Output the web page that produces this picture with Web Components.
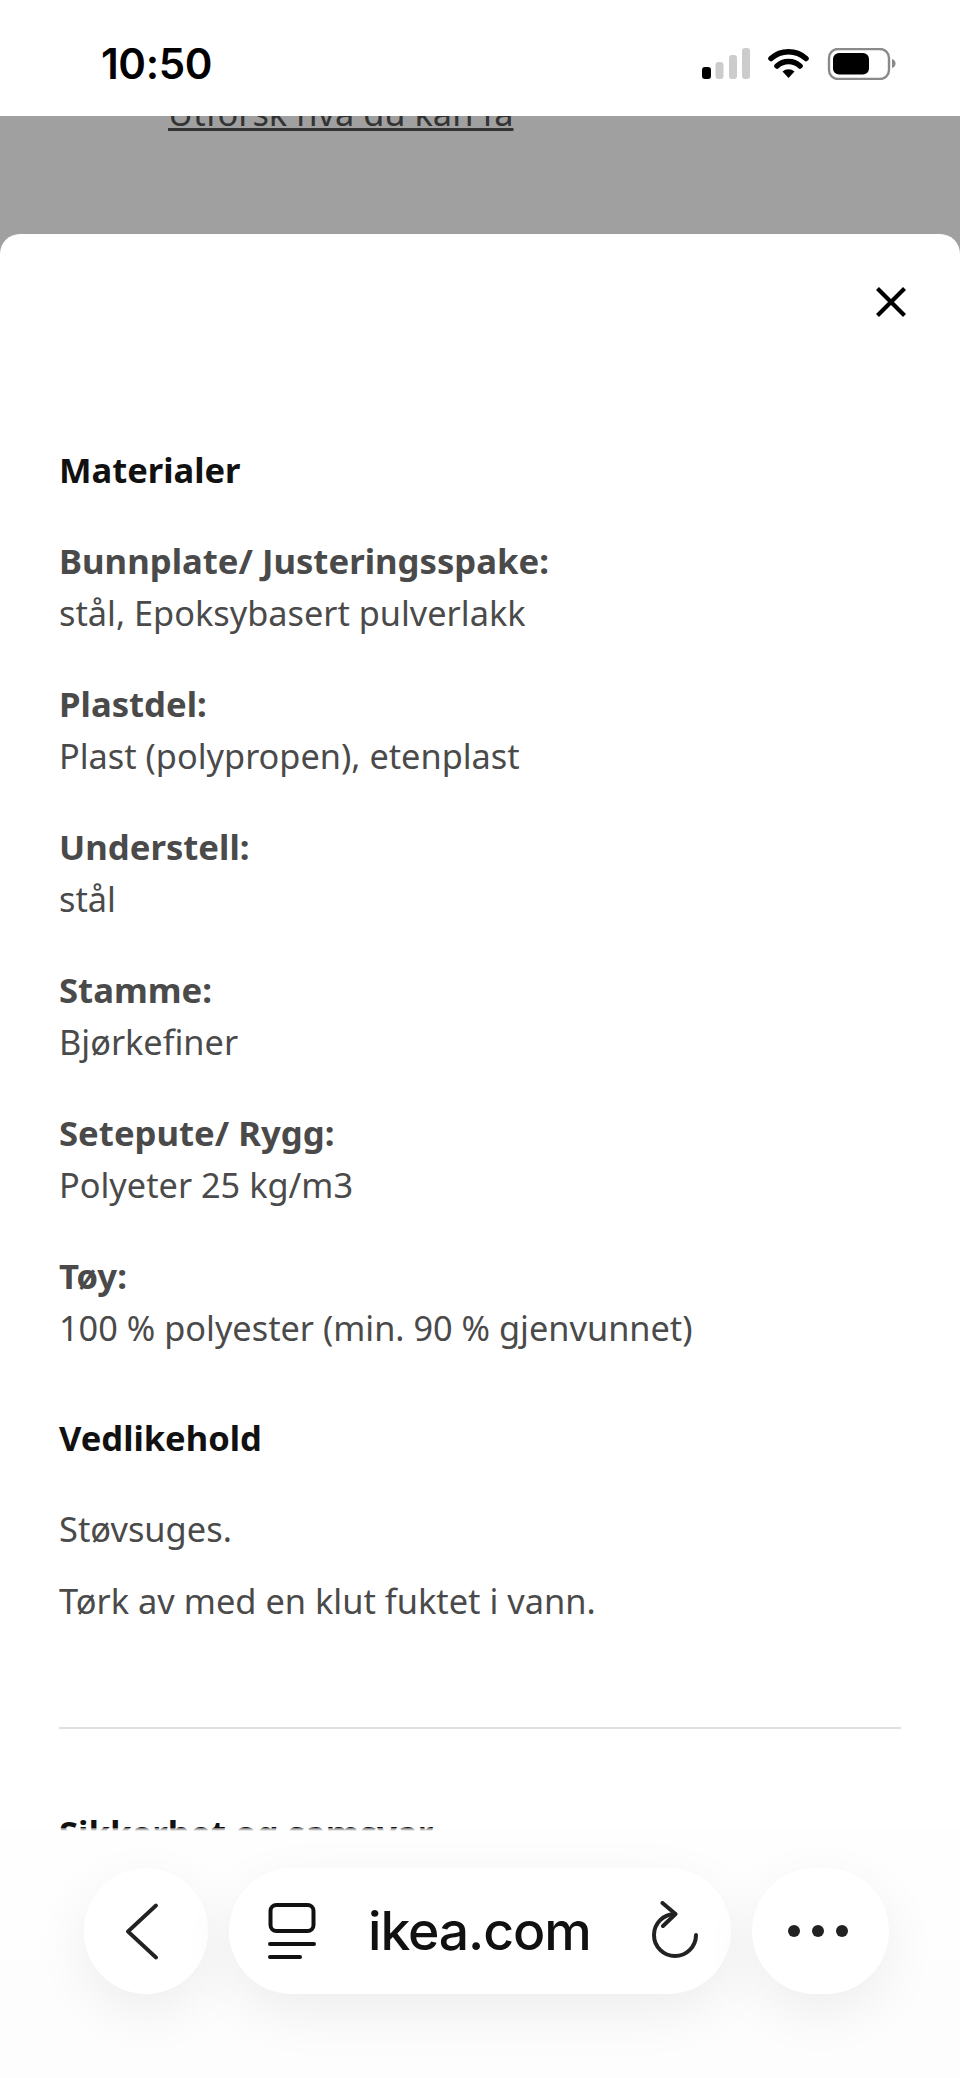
<!DOCTYPE html>
<html lang="no">
<head>
<meta charset="utf-8">
<title>Materialer</title>
<style>
  html, body { margin: 0; height: 2078px; overflow: hidden; background: #a0a0a0; }
  body { display: flex; flex-direction: column; position: relative; font-family: "Noto Sans", sans-serif; }
</style>
</head>
<body>
<ios-status time="10:50"></ios-status>
<page-scrim>Utforsk hva du kan få</page-scrim>
<sheet-modal>
  <mat-heading>Materialer</mat-heading>
  <mat-row label="Bunnplate/ Justeringsspake:">stål, Epoksybasert pulverlakk</mat-row>
  <mat-row label="Plastdel:">Plast (polypropen), etenplast</mat-row>
  <mat-row label="Understell:">stål</mat-row>
  <mat-row label="Stamme:">Bjørkefiner</mat-row>
  <mat-row label="Setepute/ Rygg:">Polyeter 25 kg/m3</mat-row>
  <mat-row label="Tøy:">100 % polyester (min. 90 % gjenvunnet)</mat-row>
  <mat-heading class="care">Vedlikehold</mat-heading>
  <care-list>
    <p>Støvsuges.</p>
    <p>Tørk av med en klut fuktet i vann.</p>
  </care-list>
  <accordion-row>Sikkerhet og samsvar</accordion-row>
</sheet-modal>
<safari-bar url="ikea.com"></safari-bar>

<script>
class IosStatus extends HTMLElement {
  constructor() {
    super();
    const shadow = this.attachShadow({ mode: "open" });
    shadow.innerHTML = `
      <style>
        :host { display: flex; flex: 0 0 116px; height: 116px; background: #fff; position: relative; z-index: 2; align-items: flex-start; justify-content: space-between; }
        .time { margin: 38px 0 0 101px; font: 600 42px/52px Inter, sans-serif; color: #000; letter-spacing: -0.4px; }
        svg { margin: 48px 64px 0 0; display: block; }
      </style>
      <span class="time"></span>
      <svg width="194" height="32" viewBox="702 48 194 32">
        <rect x="702" y="67" width="9" height="12" rx="3" fill="#000"/>
        <rect x="715.500" y="62" width="8" height="17" rx="3" fill="#ccc"/>
        <rect x="729" y="55" width="8" height="24" rx="3" fill="#ccc"/>
        <rect x="742" y="48" width="8" height="31" rx="3" fill="#ccc"/>
        <path d="M771 58.500a26 26 0 0 1 35 0M777 66a17 17 0 0 1 23 0" fill="none" stroke="#000" stroke-width="5.500" stroke-linecap="round"/>
        <path d="M788.500 78l-6-6.500a9 9 0 0 1 12 0z" fill="#000"/>
        <rect x="829" y="49" width="60" height="30" rx="9" fill="none" stroke="#8a8a8a" stroke-width="2.400"/>
        <rect x="833" y="53" width="36" height="21.500" rx="6" fill="#000"/>
        <path d="M892 59c2.500 .5 3.500 2.500 3.500 4.500s-1 4-3.500 4.500z" fill="#8a8a8a"/>
      </svg>`;
    shadow.querySelector(".time").textContent = this.getAttribute("time");
  }
}
customElements.define("ios-status", IosStatus);

class PageScrim extends HTMLElement {
  constructor() {
    super();
    this.attachShadow({ mode: "open" }).innerHTML = `
      <style>
        :host { display: block; flex: 0 0 118px; height: 118px; overflow: hidden; background: #a0a0a0; }
        a { display: block; margin: -21px 0 0 168px; font-size: 34.400px; line-height: 36px; color: #333; text-decoration: underline; text-decoration-thickness: 3px; text-underline-offset: 2px; text-decoration-skip-ink: none; white-space: nowrap; }
      </style>
      <a><slot></slot></a>`;
  }
}
customElements.define("page-scrim", PageScrim);

class SheetModal extends HTMLElement {
  constructor() {
    super();
    this.attachShadow({ mode: "open" }).innerHTML = `
      <style>
        :host { display: block; flex: 1; background: #fff; border-radius: 20px 20px 0 0; padding: 210px 59px 0; position: relative; overflow: hidden; min-height: 0; }
        svg { position: absolute; top: 53px; right: 54px; }
      </style>
      <svg width="30" height="30" viewBox="0 0 30 30"><path d="M1.500 1.500l27 27M28.500 1.500l-27 27" fill="none" stroke="#000" stroke-width="4.200"/></svg>
      <slot></slot>`;
  }
}
customElements.define("sheet-modal", SheetModal);

class MatHeading extends HTMLElement {
  constructor() {
    super();
    this.attachShadow({ mode: "open" }).innerHTML = `
      <style>
        :host { display: block; font-size: 34.500px; line-height: 52px; font-weight: 700; color: #111; margin-bottom: 39px; }
        :host(.care) { margin-top: 58px; margin-bottom: 39px; }
      </style>
      <slot></slot>`;
  }
}
customElements.define("mat-heading", MatHeading);

class MatRow extends HTMLElement {
  constructor() {
    super();
    this.attachShadow({ mode: "open" }).innerHTML = `
      <style>
        :host { display: block; font-size: 34.300px; line-height: 52px; color: #4a4a4a; margin-bottom: 39px; }
        b { display: block; font-weight: 700; font-size: 34.700px; }
      </style>
      <b></b><slot></slot>`;
    this.shadowRoot.querySelector("b").textContent = this.getAttribute("label");
  }
}
customElements.define("mat-row", MatRow);

class CareList extends HTMLElement {
  constructor() {
    super();
    this.attachShadow({ mode: "open" }).innerHTML = `
      <style>
        :host { display: flex; flex-direction: column; gap: 20px; font-size: 34.400px; line-height: 52px; color: #4a4a4a; padding-bottom: 100px; border-bottom: 2px solid #dfdfdf; }
        ::slotted(p) { margin: 0; }
      </style>
      <slot></slot>`;
  }
}
customElements.define("care-list", CareList);

class AccordionRow extends HTMLElement {
  constructor() {
    super();
    this.attachShadow({ mode: "open" }).innerHTML = `
      <style>
        :host { display: flex; justify-content: space-between; align-items: center; margin-top: 78px; font-size: 34.700px; line-height: 52px; font-weight: 700; color: #111; }
        svg { margin: 10px 17px 0 0; }
      </style>
      <slot></slot>
      <svg width="26" height="16" viewBox="0 0 26 16"><path d="M2 2l11 11L24 2" fill="none" stroke="#111" stroke-width="3"/></svg>`;
  }
}
customElements.define("accordion-row", AccordionRow);

class SafariBar extends HTMLElement {
  constructor() {
    super();
    const shadow = this.attachShadow({ mode: "open" });
    shadow.innerHTML = `
      <style>
        :host { position: absolute; left: 0; right: 0; bottom: 0; height: 250px; display: flex; align-items: flex-start; gap: 21px; padding: 40px 71px 0 84px; box-sizing: border-box; background: linear-gradient(180deg, rgba(254,254,254,.4) 0, #fefefe 3px, #fdfdfd 100%); }
        .btn { display: flex; align-items: center; height: 126px; background: #fff; border-radius: 63px; box-shadow: 0 18px 56px rgba(0,0,0,.065); box-sizing: border-box; }
        .back { flex: 0 0 124px; padding-left: 40px; }
        .url { flex: 0 0 502px; padding-left: 39px; }
        .more { flex: 0 0 137px; justify-content: center; padding-right: 5px; }
        .url span { margin-left: 52px; font: 500 53.500px/60px Inter, sans-serif; letter-spacing: -1.100px; color: #111; }
        .url .reload { margin-left: auto; margin-right: 31px; }
        svg { display: block; }
      </style>
      <div class="btn back">
        <svg width="36" height="58" viewBox="0 0 36 58"><path d="M32 3.500L4 29.500l28 26" fill="none" stroke="#222" stroke-width="3.800" stroke-linecap="round" stroke-linejoin="round"/></svg>
      </div>
      <div class="btn url">
        <svg width="48" height="56" viewBox="0 0 48 56">
          <rect x="2.500" y="2" width="43" height="26" rx="6" fill="none" stroke="#111" stroke-width="4"/>
          <path d="M2 41h44M2 54h30" fill="none" stroke="#111" stroke-width="4" stroke-linecap="round"/>
        </svg>
        <span></span>
        <svg class="reload" width="50" height="60" viewBox="0 0 50 60">
          <path d="M25 13a21 21 0 1 0 21 21" fill="none" stroke="#222" stroke-width="4" stroke-linecap="round"/>
          <path d="M12.500 2L25.500 13 13 25" fill="none" stroke="#222" stroke-width="4" stroke-linecap="round" stroke-linejoin="round"/>
        </svg>
      </div>
      <div class="btn more">
        <svg width="60" height="12" viewBox="0 0 60 12"><circle cx="6" cy="6" r="6" fill="#222"/><circle cx="30" cy="6" r="6" fill="#222"/><circle cx="54" cy="6" r="6" fill="#222"/></svg>
      </div>`;
    shadow.querySelector(".url span").textContent = this.getAttribute("url");
  }
}
customElements.define("safari-bar", SafariBar);
</script>
</body>
</html>
